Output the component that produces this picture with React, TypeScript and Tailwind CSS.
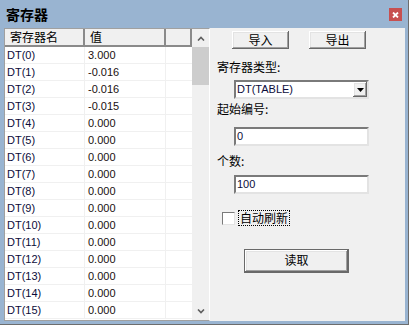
import React from 'react'

const rows: [string, string][] = [
  ['DT(0)', '3.000'],
  ['DT(1)', '-0.016'],
  ['DT(2)', '-0.016'],
  ['DT(3)', '-0.015'],
  ...Array.from({ length: 12 }, (_, i): [string, string] => [`DT(${i + 4})`, '0.000']),
]

const raised =
  'bg-[#f0f0f0] shadow-[inset_-1px_-1px_0_#696969,inset_1px_1px_0_#ffffff,inset_-2px_-2px_0_#a0a0a0,inset_2px_2px_0_#e3e3e3]'
const sunken =
  'bg-white border-2 border-t-[#7a7a7a] border-l-[#7a7a7a] border-r-[#e3e3e3] border-b-[#e3e3e3]'

const Chevron = ({ up }: { up?: boolean }) => (
  <svg width="8" height="5" viewBox="0 0 8 5">
    <polyline
      points={up ? '1,4.5 4,1.5 7,4.5' : '1,0.5 4,3.5 7,0.5'}
      fill="none"
      stroke="#5f5f5f"
      strokeWidth="1.6"
    />
  </svg>
)

export default function App() {
  return (
    <div className="w-[409px] h-[325px] bg-[#99b4d1] border-r border-b border-[#6d6d6d] flex flex-col font-['Liberation_Sans','Noto_Sans_CJK_SC',sans-serif] text-black">
      {/* title bar */}
      <div className="h-[28px] shrink-0 flex items-start justify-between pl-[6px] pr-[6px]">
        <span className="mt-[4px] text-[14px] leading-[20px] font-bold font-['Noto_Sans_CJK_SC',sans-serif]">寄存器</span>
        <div className="mt-[8px] w-[13px] h-[13px] bg-[#c75050] flex items-center justify-center">
          <svg width="7" height="6" viewBox="0 0 7 6">
            <path d="M1 0.5 L6 5.5 M6 0.5 L1 5.5" stroke="#fff" strokeWidth="1.8" />
          </svg>
        </div>
      </div>

      {/* client area */}
      <div className="ml-[4px] mr-[3px] h-[293px] flex bg-[#f0f0f0]">
        {/* list */}
        <div className="w-[206px] h-full flex border border-[#a0a0a0] border-r-white bg-white">
          <div className="w-[187px] h-full overflow-hidden flex flex-col">
            <div className="h-[18px] shrink-0 flex bg-[#f0f0f0] text-[12px] font-['Noto_Sans_CJK_SC',sans-serif]">
              <div className="w-[80px] border-r-2 border-b-2 border-[#8a8a8a] pl-[5px] leading-[16px]">寄存器名</div>
              <div className="w-[81px] border-r-2 border-b-2 border-[#8a8a8a] pl-[5px] leading-[16px]">值</div>
              <div className="w-[26px] border-r-2 border-b-2 border-[#8a8a8a]" />
            </div>
            {rows.map(([name, val]) => (
              <div key={name} className="h-[17px] shrink-0 flex text-[11px] border-b border-[#f0f0f0]">
                <div className="w-[80px] border-r border-[#f0f0f0] pl-[2px] flex items-center text-[#0c0c3a]">{name}</div>
                <div className="w-[81px] border-r border-[#f0f0f0] pl-[3px] flex items-center text-[#1a1010]">{val}</div>
                <div className="w-[26px]" />
              </div>
            ))}
          </div>
          {/* scrollbar */}
          <div className="w-[17px] h-full flex flex-col bg-[#f0f0f0]">
            <div className="h-[18px] flex items-center justify-center">
              <Chevron up />
            </div>
            <div className="h-[38px] bg-[#cdcdcd]" />
            <div className="flex-1" />
            <div className="h-[17px] flex items-center justify-center">
              <Chevron />
            </div>
          </div>
        </div>

        {/* right panel */}
        <div className="flex-1 flex flex-col items-start text-[12px]">
          <div className="mt-[3px] ml-[22px] flex gap-[20px] font-['Noto_Sans_CJK_SC',sans-serif]">
            <button className={`w-[57px] h-[18px] leading-[16px] ${raised}`}>导入</button>
            <button className={`w-[57px] h-[18px] leading-[16px] ${raised}`}>导出</button>
          </div>

          <div className="mt-[10px] ml-[7px] leading-[16px] font-['Noto_Sans_CJK_SC',sans-serif]">寄存器类型:</div>
          <div className={`mt-[5px] ml-[24px] w-[135px] h-[19px] flex ${sunken}`}>
            <span className="flex-1 pl-[1px] text-[11px] leading-[15px] text-[#0c0c3a]">DT(TABLE)</span>
            <div className={`w-[14px] h-[15px] flex items-center justify-center ${raised}`}>
              <svg width="7" height="4" viewBox="0 0 7 4">
                <polygon points="0,0 7,0 3.5,4" fill="#000" />
              </svg>
            </div>
          </div>

          <div className="mt-[2px] ml-[7px] leading-[16px] font-['Noto_Sans_CJK_SC',sans-serif]">起始编号:</div>
          <div className={`mt-[10px] ml-[24px] w-[135px] h-[19px] pl-[1px] text-[11px] leading-[15px] text-[#0c0c3a] ${sunken}`}>0</div>

          <div className="mt-[7px] ml-[7px] leading-[16px] font-['Noto_Sans_CJK_SC',sans-serif]">个数:</div>
          <div className={`mt-[6px] ml-[24px] w-[135px] h-[19px] pl-[1px] text-[11px] leading-[15px] text-[#0c0c3a] ${sunken}`}>100</div>

          <div className="mt-[16px] ml-[12px] h-[16px] flex items-center">
            <div className={`w-[13px] h-[13px] ${sunken} border-[1px]`} />
            <span className="ml-[3px] px-[1px] leading-[14px] border border-dotted border-black font-['Noto_Sans_CJK_SC',sans-serif]">自动刷新</span>
          </div>

          <button className="mt-[23px] ml-[34px] w-[105px] h-[24px] border border-[#696969] font-['Noto_Sans_CJK_SC',sans-serif]">
            <div className={`w-full h-full leading-[20px] ${raised}`}>读取</div>
          </button>
        </div>
      </div>
    </div>
  )
}
